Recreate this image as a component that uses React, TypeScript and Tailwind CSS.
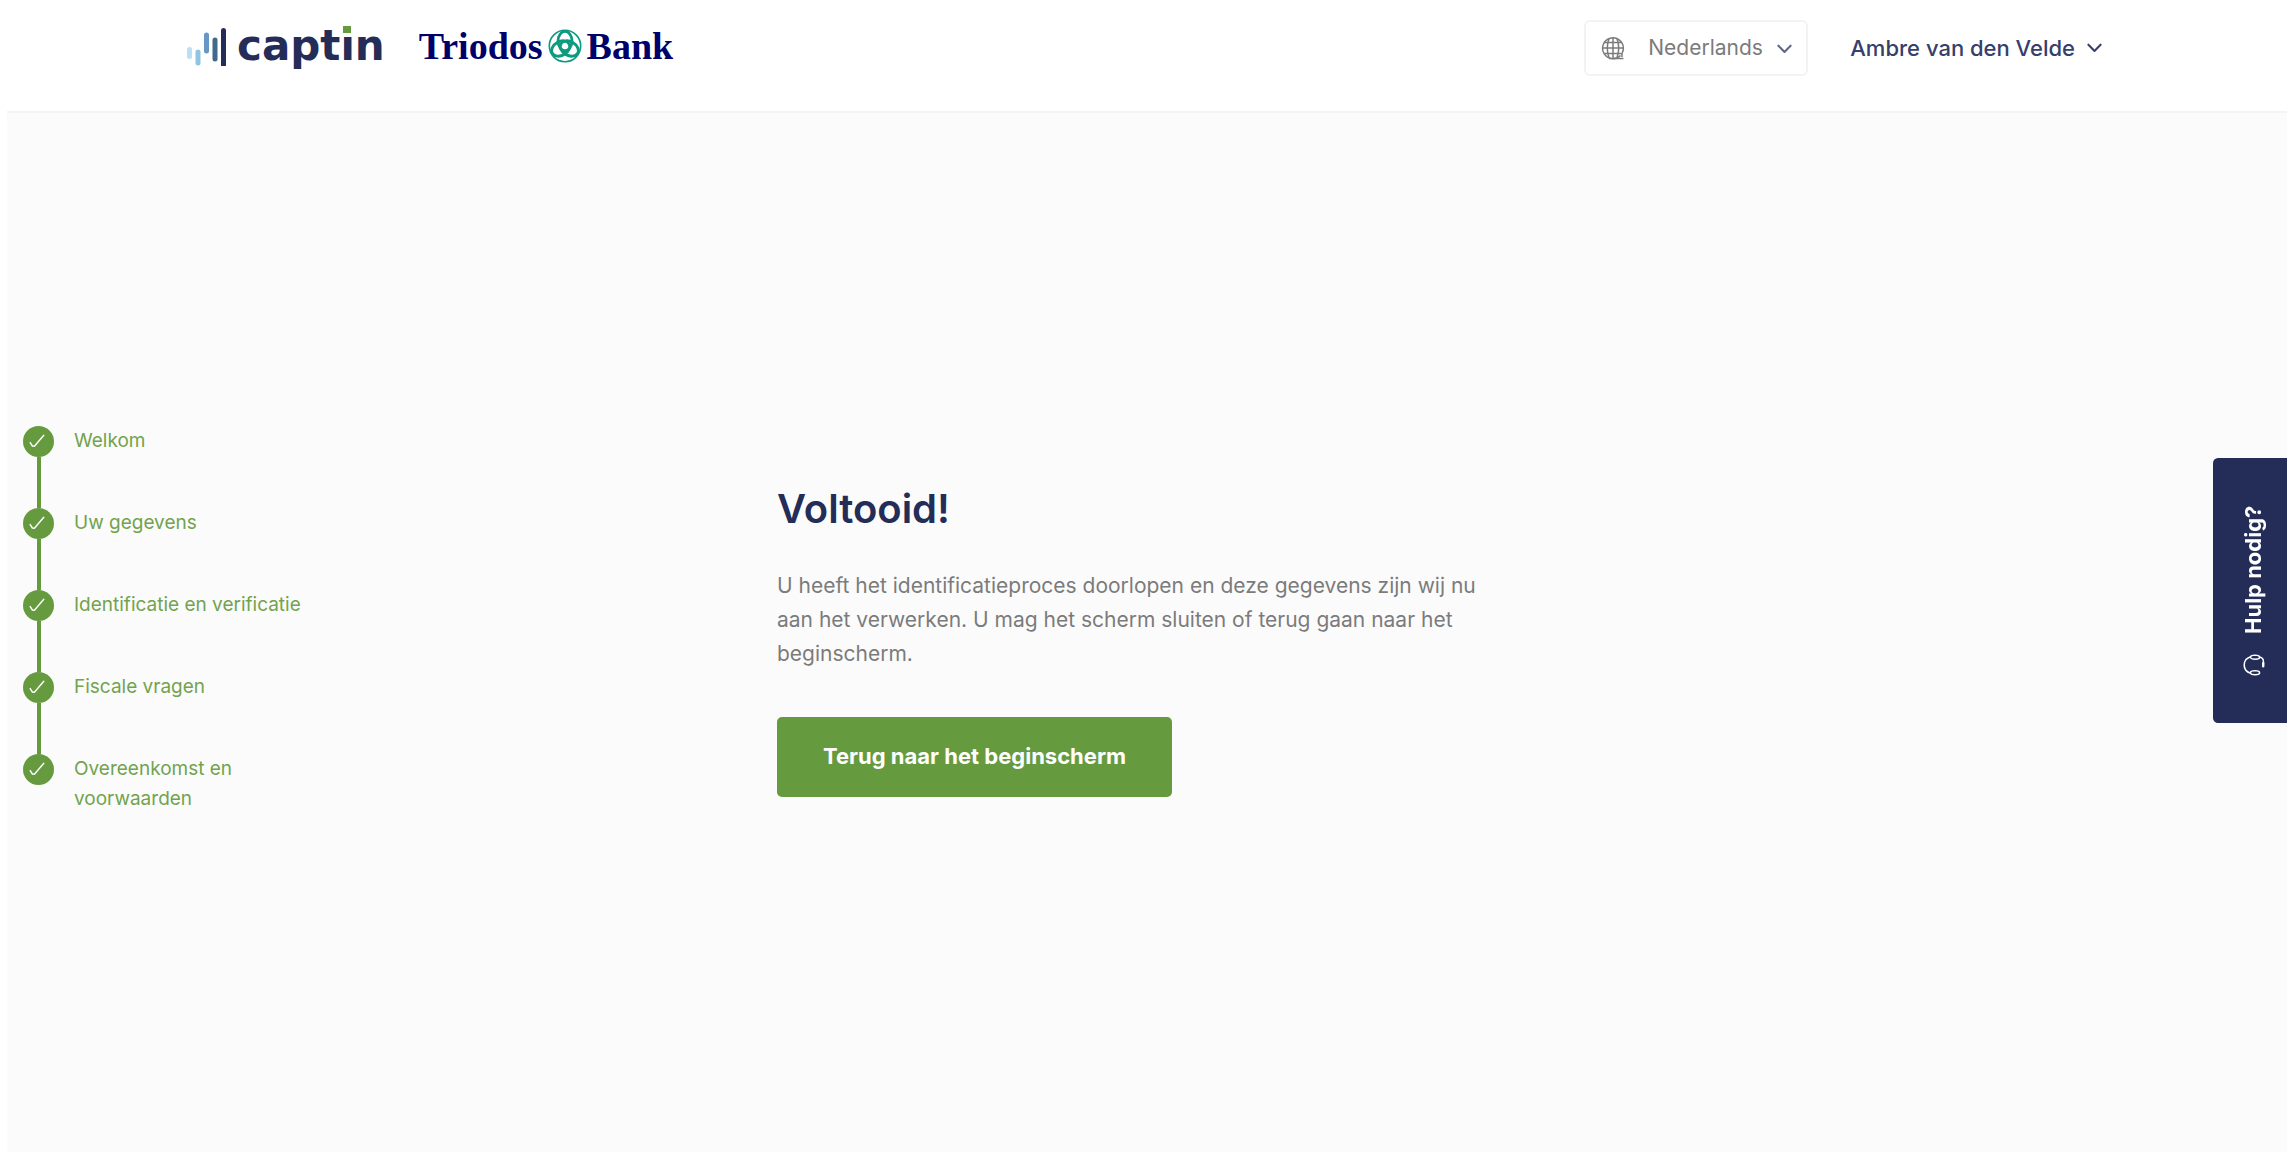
import { ReactNode } from 'react';

const steps = ['Welkom', 'Uw gegevens', 'Identificatie en verificatie', 'Fiscale vragen', 'Overeenkomst en voorwaarden'];

const Chevron = ({ className }: { className?: string }) => (
  <svg viewBox="0 0 16 10" className={`w-[15px] h-[10px] ${className ?? ''}`} fill="none" stroke="currentColor" strokeWidth="2.2">
    <path d="M1.5 1.5 8 8.2 14.5 1.5" strokeLinecap="round" strokeLinejoin="round" />
  </svg>
);

const Check = () => (
  <svg viewBox="0 0 16 14" className="w-4 h-[14px]" fill="none" stroke="currentColor" strokeWidth="1.4">
    <path d="M1.2 8.6 3.4 12 5.4 12.2 14.8 1.2" strokeLinecap="round" strokeLinejoin="round" />
  </svg>
);

const Globe = () => (
  <svg viewBox="0 0 24 24" className="w-6 h-6" fill="none" stroke="currentColor" strokeWidth="1.5">
    <path d="M19.5 19.5A10.4 10.4 0 1 1 22.4 12c0 1.8-.4 3.4-1.2 4.8" />
    <path d="M12 1.6v20.8M8 2.500C6 8 6 16 8 21.500M16 2.500C18 8 18 16 16 21.500" />
    <path d="M1.6 12h20.8M3.5 6.5h17M3.5 17.5h17M8 22.4h14.5M21 17v4" />
  </svg>
);

const Headset = () => (
  <svg viewBox="0 0 22 22" className="w-[22px] h-[22px] rotate-90" fill="none" stroke="currentColor" strokeWidth="1.5">
    <ellipse cx="3.2" cy="12" rx="2" ry="4.6" />
    <ellipse cx="18.8" cy="12" rx="2" ry="4.6" />
    <path d="M2.8 7.6C4 3.6 7 1.2 11 1.2s7 2.4 8.200 6.400M19 16.6c-.4 2.6-2 3.8-4.4 3.8h-3" />
    <path d="M9.8 20.2h3" strokeWidth="2.4" strokeLinecap="round" />
  </svg>
);

const CaptinLogo = () => (
  <a href="#" className="flex gap-[10px] text-[#232d57]">
    <svg viewBox="0 0 40 42" className="w-10 h-[42px]" strokeWidth="5" strokeLinecap="round">
      <path d="M2.5 25.5v7" stroke="#bbdff3" />
      <path d="M11 28v11" stroke="#8dc6e3" />
      <path d="M19.5 11v16" stroke="#6798c4" />
      <path d="M28 16v19" stroke="#43698a" />
      <path d="M36.5 6.5v36" stroke="#232d57" />
    </svg>
    <span className="font-['DejaVu_Sans',sans-serif] font-bold text-[42px] leading-[44px]">
      capt
      <span className="relative">
        i
        <span className="absolute left-[3px] top-[5px] w-[9px] h-[10px] bg-white" />
        <span className="absolute left-[3px] top-[5px] w-2 h-[7px] bg-[#669a3f]" />
      </span>
      n
    </span>
  </a>
);

const TriodosLogo = () => (
  <a href="#" className="flex items-center gap-[5px] font-['Liberation_Serif',serif] font-bold text-[38px] leading-[44px] text-[#00006b]">
    Triodos
    <svg viewBox="0 0 34 34" className="w-[34px] h-[34px]" fill="none" stroke="#0c9a80">
      <circle cx="17" cy="17" r="15.7" strokeWidth="1.6" />
      {[0, 120, 240].map((angle) => (
        <ellipse key={angle} cx="17" cy="12" rx="7" ry="9.6" strokeWidth="2.8" transform={`rotate(${angle} 17 17)`} />
      ))}
    </svg>
    Bank
  </a>
);

const Header = () => (
  <header className="flex justify-between items-start h-[113px] pt-5 pl-[180px] pr-[185px] bg-white border-b-2 border-[#f4f4f4]">
    <div className="flex items-start gap-[34px] pt-1">
      <CaptinLogo />
      <TriodosLogo />
    </div>
    <div className="flex items-center gap-[42px]">
      <div className="relative text-[#7b7b7b]">
        <span className="absolute left-[17px] top-4 pointer-events-none">
          <Globe />
        </span>
        <select
          aria-label="Taal"
          className="appearance-none w-[224px] h-14 pl-[62px] pr-10 bg-white border-2 border-[#f3f3f3] rounded-md text-[21px]"
        >
          <option>Nederlands</option>
        </select>
        <Chevron className="absolute right-4 top-6 text-[#5f6784] pointer-events-none" />
      </div>
      <button className="flex items-center gap-3 text-[22px] font-medium text-[#36406b]">
        Ambre van den Velde
        <Chevron />
      </button>
    </div>
  </header>
);

const Step = ({ children }: { children: ReactNode }) => (
  <li className="group flex gap-5 h-[82px] text-[#72a34e]">
    <div className="flex flex-col items-center">
      <span className="flex justify-center items-center shrink-0 w-[31px] h-[31px] pr-1 rounded-full bg-[#669a3f] text-white">
        <Check />
      </span>
      <span className="grow w-1 bg-[#669a3f] group-last:hidden" />
    </div>
    <p className="w-60 text-[19px] leading-[30px]">{children}</p>
  </li>
);

export default function App() {
  return (
    <div className="flex flex-col min-h-screen pl-[7px] bg-white font-[Inter,sans-serif]">
      <Header />
      <div className="flex grow items-center bg-[#fbfbfb]">
        <ol className="w-1/3 pl-4 pb-1">
          {steps.map((step) => (
            <Step key={step}>{step}</Step>
          ))}
        </ol>
        <main className="flex flex-col items-start gap-9 pt-4 pl-[10px]">
          <h1 className="text-[40px] leading-[48px] font-semibold text-[#232d57]">Voltooid!</h1>
          <p className="max-w-[740px] text-[21px] leading-[34px] text-[#7b7b7b]">
            U heeft het identificatieproces doorlopen en deze gegevens zijn wij nu aan het verwerken. U mag het scherm
            sluiten of terug gaan naar het beginscherm.
          </p>
          <button className="mt-[10px] h-20 px-[46px] rounded-[5px] bg-[#669a3f] text-[22px] font-bold text-white">
            Terug naar het beginscherm
          </button>
        </main>
      </div>
      <button className="fixed right-0 top-[458px] flex justify-center items-center gap-5 w-[74px] h-[265px] pr-2 rotate-180 rounded-r-[5px] bg-[#232d57] text-[22px] font-bold text-white [writing-mode:vertical-rl]">
        <Headset />
        Hulp nodig?
      </button>
    </div>
  );
}
